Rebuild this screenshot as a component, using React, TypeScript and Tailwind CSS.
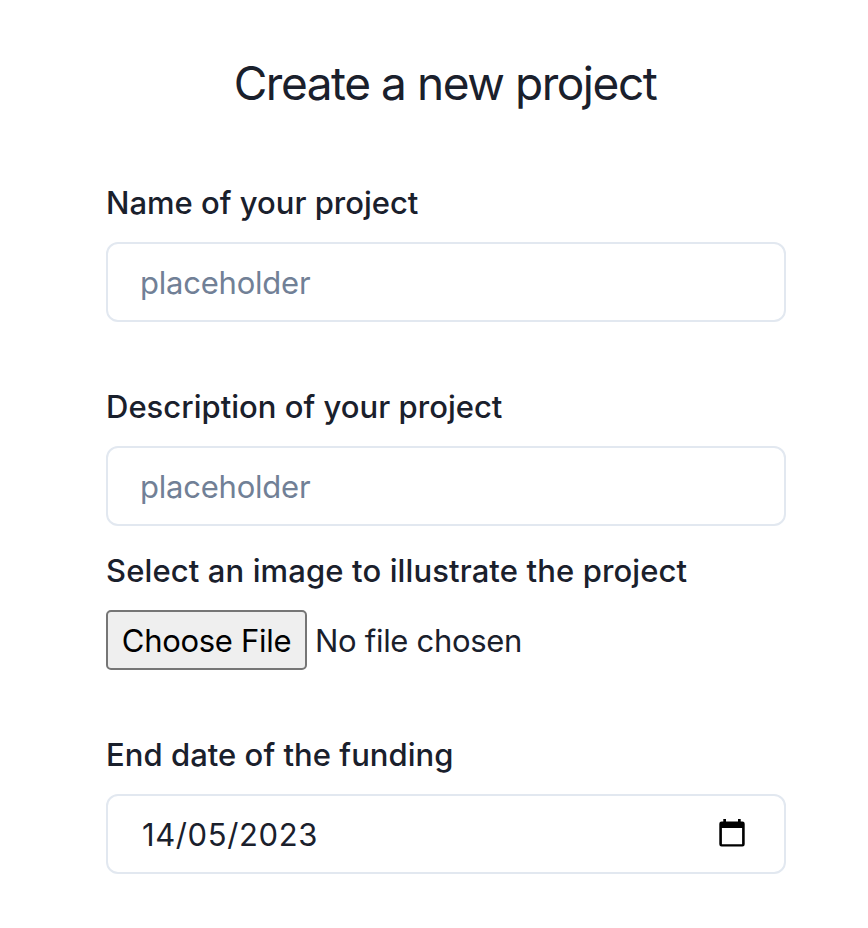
import React from "react";

const label = "block pt-px h-12 font-medium text-[31px] leading-[48px] text-[#1A202C] whitespace-nowrap";
const box = "mt-4 flex h-20 w-full items-center rounded-xl border-2 border-[#E2E8F0] bg-white px-8 text-[31px] text-[#1A202C] outline-none";
const textBox = box + " tracking-[-0.22px] placeholder:text-[#718096]";

function Field({ text, tracking, children }: { text: string; tracking: string; children: React.ReactNode }) {
  return (
    <div>
      <label className={label + " " + tracking}>{text}</label>
      {children}
    </div>
  );
}

export default function App() {
  return (
    <main className="h-[928px] w-[868px] overflow-hidden bg-white pl-[106px] pr-[82px] pt-[47px] font-['Inter','Liberation_Sans',sans-serif] text-[#1A202C]">
      <h1 className="h-[73px] pr-0.5 text-center text-[46px] leading-[72px] tracking-[-1.45px] whitespace-nowrap">Create a new project</h1>
      <div className="mt-[58px]">
        <Field text="Name of your project" tracking="tracking-[0px]">
          <input className={textBox} placeholder="placeholder" />
        </Field>
      </div>
      <div className="mt-[60px]">
        <Field text="Description of your project" tracking="tracking-[0.02px]">
          <input className={textBox} placeholder="placeholder" />
        </Field>
      </div>
      <div className="mt-[20px]">
        <Field text="Select an image to illustrate the project" tracking="tracking-[0.12px]">
          <div className="mt-4 flex items-center text-[31px]">
            <button className="h-[60px] w-[201px] rounded-[5px] border-2 border-[#767676] bg-[#efefef] pt-0.5 tracking-[-0.3px] whitespace-nowrap text-black">Choose File</button>
            <span className="ml-2 pt-0.5 tracking-[-0.3px] whitespace-nowrap">No file chosen</span>
          </div>
        </Field>
      </div>
      <div className="mt-[60px]">
        <Field text="End date of the funding" tracking="tracking-[0.04px]">
          <div className={box + " justify-between"}>
            <span className="pl-0.5 pt-0.5 tracking-[0.6px]">14/05/2023</span>
            <svg className="mr-[7px] mb-0.5" width="26" height="28" viewBox="0 0 26 28" fill="black">
              <path fillRule="evenodd" d="M4.3 0H7v2.4h12V0h2.7v2.4h1.7a2.3 2.3 0 0 1 2.3 2.3v20.6a2.3 2.3 0 0 1-2.3 2.3H2.6a2.3 2.3 0 0 1-2.3-2.3V4.7a2.3 2.3 0 0 1 2.3-2.3h1.7V0ZM2.9 9v16.2h20.2V9H2.9Z" />
            </svg>
          </div>
        </Field>
      </div>
    </main>
  );
}
